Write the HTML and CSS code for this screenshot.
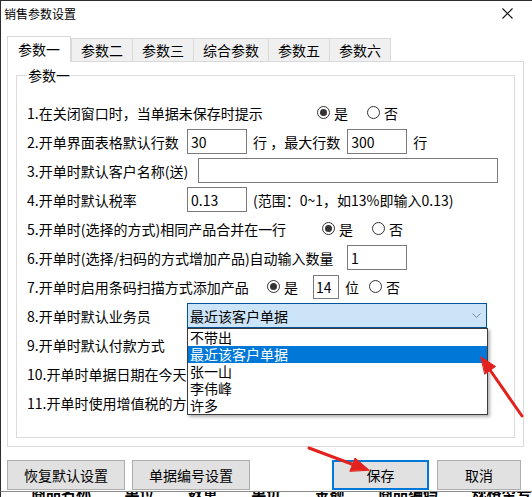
FILE: index.html
```html
<!DOCTYPE html>
<html lang="zh-CN">
<head>
    <meta charset="UTF-8">
    <title>销售参数设置</title>
    <link rel="stylesheet" href="styles.css">
</head>
<body>
    <div class="window">
        <div class="titlebar">
            <span class="title">销售参数设置</span>
            <svg class="close" width="11" height="11" viewBox="0 0 11 11">
                <path d="M0.5 0.5L10.5 10.5M10.5 0.5L0.5 10.5" stroke="#111" stroke-width="1.1" fill="none"/>
            </svg>
        </div>

        <div class="client">
            <div class="tabs">
                <div class="tab active">参数一</div>
                <div class="tab">参数二</div>
                <div class="tab">参数三</div>
                <div class="tab">综合参数</div>
                <div class="tab">参数五</div>
                <div class="tab">参数六</div>
            </div>

            <div class="page">
                <fieldset class="group">
                    <legend>参数一</legend>
                    <div class="rows">
                        <div class="row">
                            <span class="label w290">1.在关闭窗口时，当单据未保存时提示</span>
                            <span class="radio checked"><i></i>是</span>
                            <span class="radio next"><i></i>否</span>
                        </div>
                        <div class="row">
                            <span class="label w160">2.开单界面表格默认行数</span>
                            <span class="input w60">30</span>
                            <span class="after">行 ，最大行数</span>
                            <span class="input w60 after-input">300</span>
                            <span class="after">行</span>
                        </div>
                        <div class="row">
                            <span class="label w171">3.开单时默认客户名称(送)</span>
                            <span class="input w300"></span>
                        </div>
                        <div class="row">
                            <span class="label w160">4.开单时默认税率</span>
                            <span class="input w60">0.13</span>
                            <span class="after">(范围：0~1，如13%即输入0.13)</span>
                        </div>
                        <div class="row">
                            <span class="label w295">5.开单时(选择的方式)相同产品合并在一行</span>
                            <span class="radio checked"><i></i>是</span>
                            <span class="radio next"><i></i>否</span>
                        </div>
                        <div class="row">
                            <span class="label w320">6.开单时(选择/扫码的方式增加产品)自动输入数量</span>
                            <span class="input w60">1</span>
                        </div>
                        <div class="row">
                            <span class="label w240">7.开单时启用条码扫描方式添加产品</span>
                            <span class="radio checked"><i></i>是</span>
                            <span class="input digits">14</span>
                            <span class="after">位</span>
                            <span class="radio next-short"><i></i>否</span>
                        </div>
                        <div class="row">
                            <span class="label w160">8.开单时默认业务员</span>
                            <div class="combo">
                                <div class="combo-box">
                                    <span>最近该客户单据</span>
                                    <svg class="chevron" width="9" height="5" viewBox="0 0 9 5">
                                        <path d="M0.5 0.5L4.5 4.5L8.5 0.5" stroke="#7a8894" stroke-width="1" fill="none"/>
                                    </svg>
                                </div>
                                <ul class="dropdown">
                                    <li>不带出</li>
                                    <li class="selected">最近该客户单据</li>
                                    <li>张一山</li>
                                    <li>李伟峰</li>
                                    <li>许多</li>
                                </ul>
                            </div>
                        </div>
                        <div class="row">
                            <span class="label">9.开单时默认付款方式</span>
                        </div>
                        <div class="row">
                            <span class="label">10.开单时单据日期在今天的基础上顺延</span>
                        </div>
                        <div class="row">
                            <span class="label">11.开单时使用增值税的方式</span>
                        </div>
                    </div>
                </fieldset>
            </div>

            <div class="actions">
                <div class="btn-group">
                    <button class="btn btn-wide">恢复默认设置</button>
                    <button class="btn btn-wide">单据编号设置</button>
                </div>
                <div class="btn-group right">
                    <button class="btn btn-save">保存</button>
                    <button class="btn btn-cancel">取消</button>
                </div>
            </div>
        </div>

        <!-- red pointer arrows drawn on top of the dialog -->
        <svg class="arrows" width="532" height="497" viewBox="0 0 532 497">
            <g stroke="#e3211e" stroke-width="3" stroke-linecap="round" fill="#e3211e">
                <line x1="522" y1="416" x2="490" y2="370"/>
                <polygon points="481,357 495.5,366.5 485,374" stroke-width="1"/>
                <line x1="309" y1="448" x2="353" y2="464.5"/>
                <polygon points="369,470 355,458 350,471" stroke-width="1"/>
            </g>
        </svg>
    </div>

    <div class="backdrop">
        <span>商品名称 单位 数量 单价 金额 商品编码 规格型号 仓库 备注 单据 日期</span>
    </div>
</body>
</html>
```

FILE: styles.css
```css
* {
    box-sizing: border-box;
}
body {
    margin: 0;
    background: #fff;
    font-family: "Noto Sans CJK SC", "Microsoft YaHei", sans-serif;
    font-size: 14px;
    color: #000;
}
.window {
    position: relative;
    width: 532px;
    height: 492px;
    border-top: 1px solid #2d2d2d;
    border-left: 1px solid #2d2d2d;
    border-bottom: 1px solid #8a8a8a;
    background: #fff;
}
.titlebar {
    height: 25px;
    display: flex;
    align-items: center;
    justify-content: space-between;
    padding: 0 19px 0 3px;
    font-size: 12px;
    line-height: 14px;
}
.client {
    padding: 10px 8px 0 6px;
}

/* tab strip */
.tabs {
    display: flex;
    align-items: flex-end;
    height: 25px;
    position: relative;
    z-index: 2;
}
.tab {
    height: 23px;
    padding: 0 9px;
    margin-left: -1px;
    border: 1px solid #d9d9d9;
    border-bottom: 0;
    background: #f0f0f0;
    line-height: 22px;
}
.tab.active {
    height: 26px;
    margin-left: 0;
    margin-bottom: -1px;
    margin-right: 1px;
    padding: 0 10px;
    background: #fff;
    line-height: 25px;
}
.page {
    height: 386px;
    border: 1px solid #d9d9d9;
    background: #fff;
    display: flex;
    flex-direction: column;
}

/* group box */
.group {
    flex: 1;
    margin: 6px 8px 8px 8px;
    padding: 0 0 0 10px;
    border: 1px solid #dcdcdc;
    min-width: 0;
}
.group legend {
    padding: 0 1px;
    font-size: 14px;
    line-height: 14px;
}
.rows {
    margin-top: 16px;
}
.row {
    display: flex;
    align-items: center;
    height: 29px;
    white-space: nowrap;
    line-height: 20px;
}
.label {
    flex: none;
}
.w160 { width: 160px; }
.w171 { width: 171px; }
.w240 { width: 240px; }
.w290 { width: 290px; }
.w295 { width: 295px; }
.w320 { width: 320px; }

.input {
    display: flex;
    align-items: center;
    height: 25px;
    border: 1px solid #7a7a7a;
    background: #fff;
    padding-left: 3px;
}
.input.w60 { width: 60px; }
.input.w300 { width: 300px; }
.input.digits {
    width: 26px;
    height: 24px;
    margin-left: 15px;
    padding-left: 2px;
}
.after {
    margin-left: 6px;
}
.after-input {
    margin-left: 7px;
}

/* radio buttons */
.radio {
    display: flex;
    align-items: center;
    gap: 4px;
}
.radio i {
    display: flex;
    align-items: center;
    justify-content: center;
    width: 13px;
    height: 13px;
    border: 1px solid #333;
    border-radius: 50%;
    background: #fff;
}
.radio.checked i::after {
    content: "";
    width: 7px;
    height: 7px;
    border-radius: 50%;
    background: #333;
}
.radio.next {
    margin-left: 19px;
}
.radio.next-short {
    margin-left: 10px;
}

/* combo box with open list */
.combo {
    position: relative;
    width: 300px;
    height: 25px;
}
.combo-box {
    height: 25px;
    display: flex;
    align-items: center;
    justify-content: space-between;
    padding: 0 5px 0 2px;
    border: 1px solid #005499;
    background: #cce4f7;
}
.dropdown {
    position: absolute;
    top: 100%;
    left: 0;
    width: 301px;
    margin: 0;
    padding: 0;
    list-style: none;
    border: 1px solid #3d3d3d;
    background: #fff;
    box-shadow: 2px 2px 3px rgba(0,0,0,0.3);
    z-index: 5;
}
.dropdown li {
    height: 17px;
    line-height: 17px;
    padding-left: 2px;
}
.dropdown li.selected {
    background: #0078d7;
    color: #fff;
}

/* bottom buttons */
.actions {
    display: flex;
    justify-content: space-between;
    margin-top: 13px;
    padding-right: 3px;
}
.btn-group {
    display: flex;
    gap: 7px;
}
.btn-group.right {
    gap: 8px;
}
.btn {
    height: 30px;
    border: 1px solid #adadad;
    background: #e1e1e1;
    font-family: inherit;
    font-size: 14px;
    color: #000;
    padding: 0;
}
.btn-wide { width: 118px; }
.btn-save {
    width: 97px;
    border: 2px solid #0078d7;
}
.btn-cancel { width: 84px; }

.arrows {
    position: absolute;
    top: -1px;
    left: -1px;
    pointer-events: none;
    z-index: 10;
}
.backdrop {
    height: 5px;
    overflow: hidden;
    border-left: 1px solid #2d2d2d;
}
.backdrop span {
    display: block;
    margin: -11px 0 0 30px;
    font-size: 15px;
    font-weight: bold;
    white-space: nowrap;
    word-spacing: 30px;
}
```
